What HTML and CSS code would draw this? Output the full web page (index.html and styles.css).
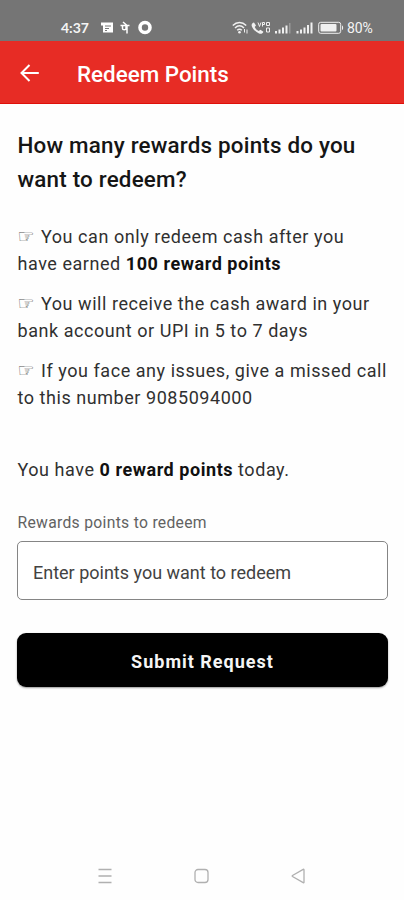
FILE: index.html
```html
<!DOCTYPE html>
<html lang="en">
<head>
    <meta charset="UTF-8">
    <meta name="viewport" content="width=device-width, initial-scale=1.0">
    <title>Redeem Points</title>
    <link rel="stylesheet" href="styles.css">
</head>
<body>
    <div class="screen">
        <div class="status-bar">
            <span class="clock">4:37</span>
            <svg class="status-left" width="54" height="16" viewBox="0 0 54 16">
                <path d="M1 2.500h12v10H3v-7H1z" fill="#fff"/>
                <path d="M5 6h6M5 8.500h4M5 10.500h2" stroke="#777" fill="none"/>
                <path d="M20.500 5.500h9M23 2l4 3.500M22.500 5.500v3c0 1.800 3.500 1.800 3.500 0v-3M27 5.500v8" stroke="#fff" stroke-width="1.500" fill="none"/>
                <circle cx="45" cy="7.500" r="5" stroke="#fff" stroke-width="3.600" fill="none"/>
            </svg>
            <svg class="status-right" width="113" height="16" viewBox="0 0 113 16">
                <g stroke="#f0f0f0" stroke-width="1.500" fill="none">
                    <path d="M.8 5.500c4-4 9.400-4 13.400 0M3 8c2.800-2.700 6.200-2.700 9 0M5.200 10.300c1.500-1.400 3.100-1.400 4.600 0"/>
                    <path d="M12.500 9v3.500M15 9.500v4" stroke-width="1"/>
                </g>
                <circle cx="7.500" cy="12.300" r="1.300" fill="#f0f0f0"/>
                <path d="M22 2.500l2 3-1.300 1.500c.9 1.900 2.200 3.200 4 4l1.700-1.300 3 2c-.8 2-2.400 2.600-4.400 1.700-3.500-1.500-6-4-7.200-7.200-.6-1.800.4-3.400 2.200-3.700z" fill="#f0f0f0"/>
                <path d="M26 2.500l1.500 4L29 2.500M30.500 6.500v-4h2v2h-2M34.500 2.500h3v3h-3zM34.500 8h3v4h-3z" stroke="#f0f0f0" fill="none"/>
                <g fill="#f0f0f0">
                    <path d="M43 11h2v2.500h-2zM46.500 9.500h2v4h-2zM50 7.500h2v6h-2zM53.500 5.500h2v8h-2z"/>
                    <path d="M57 3h1.500v10.500H57z" opacity=".3"/>
                    <path d="M64.500 11h2v2.500h-2zM68 9.500h2v4h-2zM71.500 7.500h2v6h-2zM75 5h2v8.500h-2zM78.500 2.500h2v11h-2z"/>
                    <rect x="88.500" y="4" width="16" height="7.500" rx="1"/>
                </g>
                <rect x="86.700" y="2.300" width="22" height="11" rx="2" stroke="#f0f0f0" fill="none"/>
                <path d="M110 5.500c1.500.5 1.500 4 0 4.500z" fill="#f0f0f0"/>
            </svg>
            <span class="battery">80%</span>
        </div>

        <div class="app-bar">
            <svg width="20" height="20" viewBox="0 0 20 20">
                <path d="M18.800 9H2M9.500 1l-8 8 8 8" stroke="#fff" stroke-width="2" fill="none"/>
            </svg>
            <h1>Redeem Points</h1>
        </div>

        <main class="content">
            <h2>How many rewards points do you want to redeem?</h2>
            <div class="notes">
                <p>You can only redeem cash after you have earned <b>100 reward points</b></p>
                <p>You will receive the cash award in your bank account or UPI in 5 to 7 days</p>
                <p>If you face any issues, give a missed call to this number 9085094000</p>
            </div>
            <p class="balance">You have <b>0 reward points</b> today.</p>
            <label for="points">Rewards points to redeem</label>
            <input type="text" id="points" placeholder="Enter points you want to redeem">
            <button type="button">Submit Request</button>
        </main>

        <div class="nav-bar">
            <svg width="16" height="16" viewBox="0 0 16 16"><path d="M1.500 1.500h13M1.500 8h13M1.500 14.500h13"/></svg>
            <svg width="16" height="16" viewBox="0 0 16 16"><rect x="1" y="1.500" width="13" height="13" rx="3"/></svg>
            <svg width="16" height="16" viewBox="0 0 16 16"><path d="M14 1.800v12.400q0 .8-.8.400L2.500 8.500q-.7-.5 0-1L13.200 1.400q.8-.4.8.4z"/></svg>
        </div>
    </div>
</body>
</html>
```

FILE: styles.css
```css
* {
    box-sizing: border-box;
}
body {
    margin: 0;
    font-family: Roboto, sans-serif;
    background-color: #fefefe;
    color: #303030;
}
h1, h2, p {
    margin: 0;
}
.screen {
    height: 900px;
    display: flex;
    flex-direction: column;
}
.status-bar {
    height: 41px;
    padding: 14px 0 0 61px;
    background-color: #757575;
    color: #f4f4f4;
    display: flex;
    align-items: center;
}
.clock {
    width: 28px;
    font-family: Lato, sans-serif;
    font-size: 14px;
    font-weight: 700;
}
.status-left {
    margin-left: 11px;
}
.status-right {
    margin-left: 78px;
}
.battery {
    margin-left: 2px;
    font-size: 14px;
    letter-spacing: -0.1px;
}
.app-bar {
    height: 63px;
    padding: 3px 20px 0;
    background-color: #e72c25;
    border-bottom: 1px solid #df1009;
    display: flex;
    align-items: center;
    gap: 37px;
}
.app-bar h1 {
    color: #fff;
    font-size: 22.4px;
    font-weight: 500;
}
.content {
    padding: 24px 16px 0 17px;
    flex: 1;
    display: flex;
    flex-direction: column;
}
.content h2 {
    padding-left: 0.5px;
    color: #151515;
    font-size: 22.4px;
    font-weight: 500;
    line-height: 34px;
    letter-spacing: 0.2px;
}
.notes {
    margin-top: 27px;
    display: flex;
    flex-direction: column;
    gap: 13px;
}
.content p {
    padding-left: 0.5px;
    font-size: 18px;
    line-height: 27px;
    letter-spacing: 0.55px;
}
.content b {
    color: #111;
    font-weight: 700;
}
/* pointing hand in front of every note */
.notes p::before {
    content: "☞";
    display: inline-block;
    width: 23.5px;
    color: #555;
    font-family: "DejaVu Sans", sans-serif;
    font-size: 19px;
    line-height: 20px;
    letter-spacing: 0;
}
.content .balance {
    margin-top: 45px;
}
.content label {
    margin-top: 30px;
    padding-left: 0.5px;
    color: #626262;
    font-size: 15.7px;
    line-height: 20px;
    letter-spacing: 0.3px;
}
.content input {
    height: 59px;
    margin-top: 8px;
    padding: 3px 15px 0;
    border: 1px solid #858585;
    border-radius: 5px;
    background-color: #fff;
    font-family: inherit;
    font-size: 18px;
    letter-spacing: 0;
}
.content input::placeholder {
    color: #424242;
}
.content button {
    height: 54px;
    margin-top: 33px;
    padding: 2px 0 0;
    border: none;
    border-radius: 9px;
    background-color: #000;
    color: #f5f5f5;
    font-family: inherit;
    font-size: 18px;
    font-weight: 700;
    letter-spacing: 1px;
    box-shadow: 0 1px 2px rgba(0, 0, 0, 0.4);
}
.nav-bar {
    height: 48px;
    padding: 0 98px 0 97px;
    display: flex;
    justify-content: space-between;
    align-items: center;
}
.nav-bar path, .nav-bar rect {
    fill: none;
    stroke: #b0b0b0;
    stroke-width: 1.3px;
}
```
